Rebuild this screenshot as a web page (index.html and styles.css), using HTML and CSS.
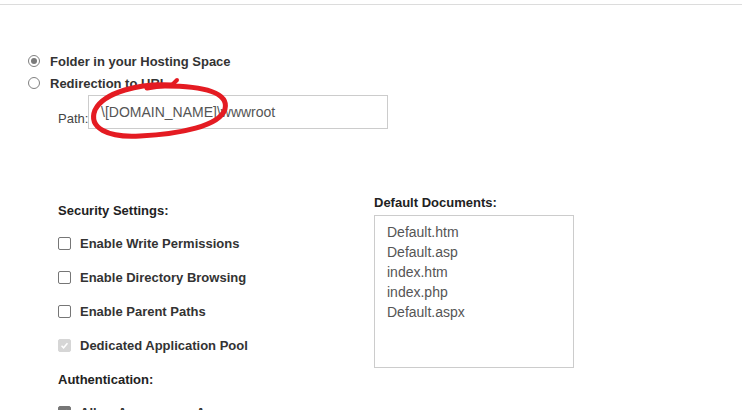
FILE: index.html
```html
<!DOCTYPE html>
<html lang="en">
<head>
  <meta charset="UTF-8">
  <title>Web Site Properties</title>
  <link rel="stylesheet" href="styles.css">
</head>
<body>

<div class="topbar"></div>

<div class="site-type">
  <label class="radio-row"><span class="radio checked"></span>Folder in your Hosting Space</label>
  <label class="radio-row"><span class="radio"></span>Redirection to URL</label>
</div>

<div class="path-row">
  <span class="path-label">Path:</span>
  <div class="path-input">\[DOMAIN_NAME]\wwwroot</div>
</div>

<div class="settings">
  <div class="left-col">
    <h4>Security Settings:</h4>
    <label class="check-row"><span class="box"></span>Enable Write Permissions</label>
    <label class="check-row"><span class="box"></span>Enable Directory Browsing</label>
    <label class="check-row"><span class="box"></span>Enable Parent Paths</label>
    <label class="check-row"><span class="box disabled"><svg viewBox="0 0 13 13"><path d="M3 6.8 L5.4 9.2 L10 3.8" fill="none" stroke="#fff" stroke-width="1.8"/></svg></span>Dedicated Application Pool</label>

    <h4>Authentication:</h4>
    <label class="check-row"><span class="box on"><svg viewBox="0 0 13 13"><path d="M3 6.8 L5.4 9.2 L10 3.8" fill="none" stroke="#fff" stroke-width="1.8"/></svg></span>Allow Anonymous Access</label>
  </div>

  <div class="right-col">
    <h4>Default Documents:</h4>
    <div class="doc-list">
      <div>Default.htm</div>
      <div>Default.asp</div>
      <div>index.htm</div>
      <div>index.php</div>
      <div>Default.aspx</div>
    </div>
  </div>
</div>

<!-- пометка от руки поверх поля -->
<svg class="markup" width="742" height="410" viewBox="0 0 742 410">
  <path d="M172,85 C140,83 104,92 95,110 C88,128 108,138 140,136 C180,134 220,126 225,109 C229,93 205,86 165,86 C158,86 152,87 147,88"
        fill="none" stroke="#e41b22" stroke-width="5" stroke-linecap="round" stroke-linejoin="round"/>
  <path d="M171,86 L177,80" fill="none" stroke="#e41b22" stroke-width="4" stroke-linecap="round"/>
</svg>

</body>
</html>
```

FILE: styles.css
```css
body {
  font-family: "Liberation Sans", Arial, sans-serif;
  font-size: 13px;
  color: #333;
  background-color: white;
  margin: 0;
  padding: 0;
  position: relative;
  height: 410px;
  overflow: hidden;
}
.topbar {
  height: 4px;
  border-bottom: 1px solid #dcdcdc;
}
.site-type {
  margin-top: 45px;
  padding-left: 28px;
}
.radio-row {
  display: flex;
  align-items: center;
  height: 22px;
  font-weight: bold;
}
.radio {
  width: 10px;
  height: 10px;
  border: 1px solid #808080;
  border-radius: 50%;
  margin-right: 10px;
  position: relative;
  background-color: white;
}
.radio.checked::after {
  content: "";
  position: absolute;
  left: 2px;
  top: 2px;
  width: 6px;
  height: 6px;
  border-radius: 50%;
  background-color: #7a7a7a;
}
.path-row {
  display: flex;
  margin-top: 1px;
  padding-left: 58px;
}
.path-label {
  align-self: flex-end;
  line-height: 16px;
  margin-bottom: 2px;
  width: 30px;
  color: #444;
}
.path-input {
  width: 286px;
  height: 32px;
  line-height: 32px;
  border: 1px solid #ccc;
  padding-left: 12px;
  font-size: 14px;
  color: #555;
}
.settings {
  display: flex;
  margin-top: 64px;
  padding-left: 58px;
}
.left-col {
  width: 316px;
  padding-top: 8px;
}
.settings h4 {
  font-size: 13px;
  line-height: 20px;
  margin: 0 0 5px 0;
  color: #222;
}
.left-col .check-row + h4 {
  margin-top: 8px;
}
.check-row {
  display: flex;
  align-items: center;
  height: 34px;
  font-weight: bold;
}
.box {
  width: 11px;
  height: 11px;
  border: 1px solid #767676;
  border-radius: 2px;
  margin-right: 9px;
  background-color: white;
  display: flex;
}
.box svg {
  width: 11px;
  height: 11px;
}
.box.disabled {
  border-color: #d6d6d6;
  background-color: #d6d6d6;
}
.box.on {
  border-color: #777;
  background-color: #777;
}
.right-col h4 {
  margin-bottom: 2px;
}
.doc-list {
  width: 186px;
  height: 145px;
  border: 1px solid #ccc;
  padding: 6px 0 0 12px;
  font-size: 14px;
  line-height: 20px;
  color: #555;
}
.markup {
  position: absolute;
  top: 0;
  left: 0;
  pointer-events: none;
}
```
